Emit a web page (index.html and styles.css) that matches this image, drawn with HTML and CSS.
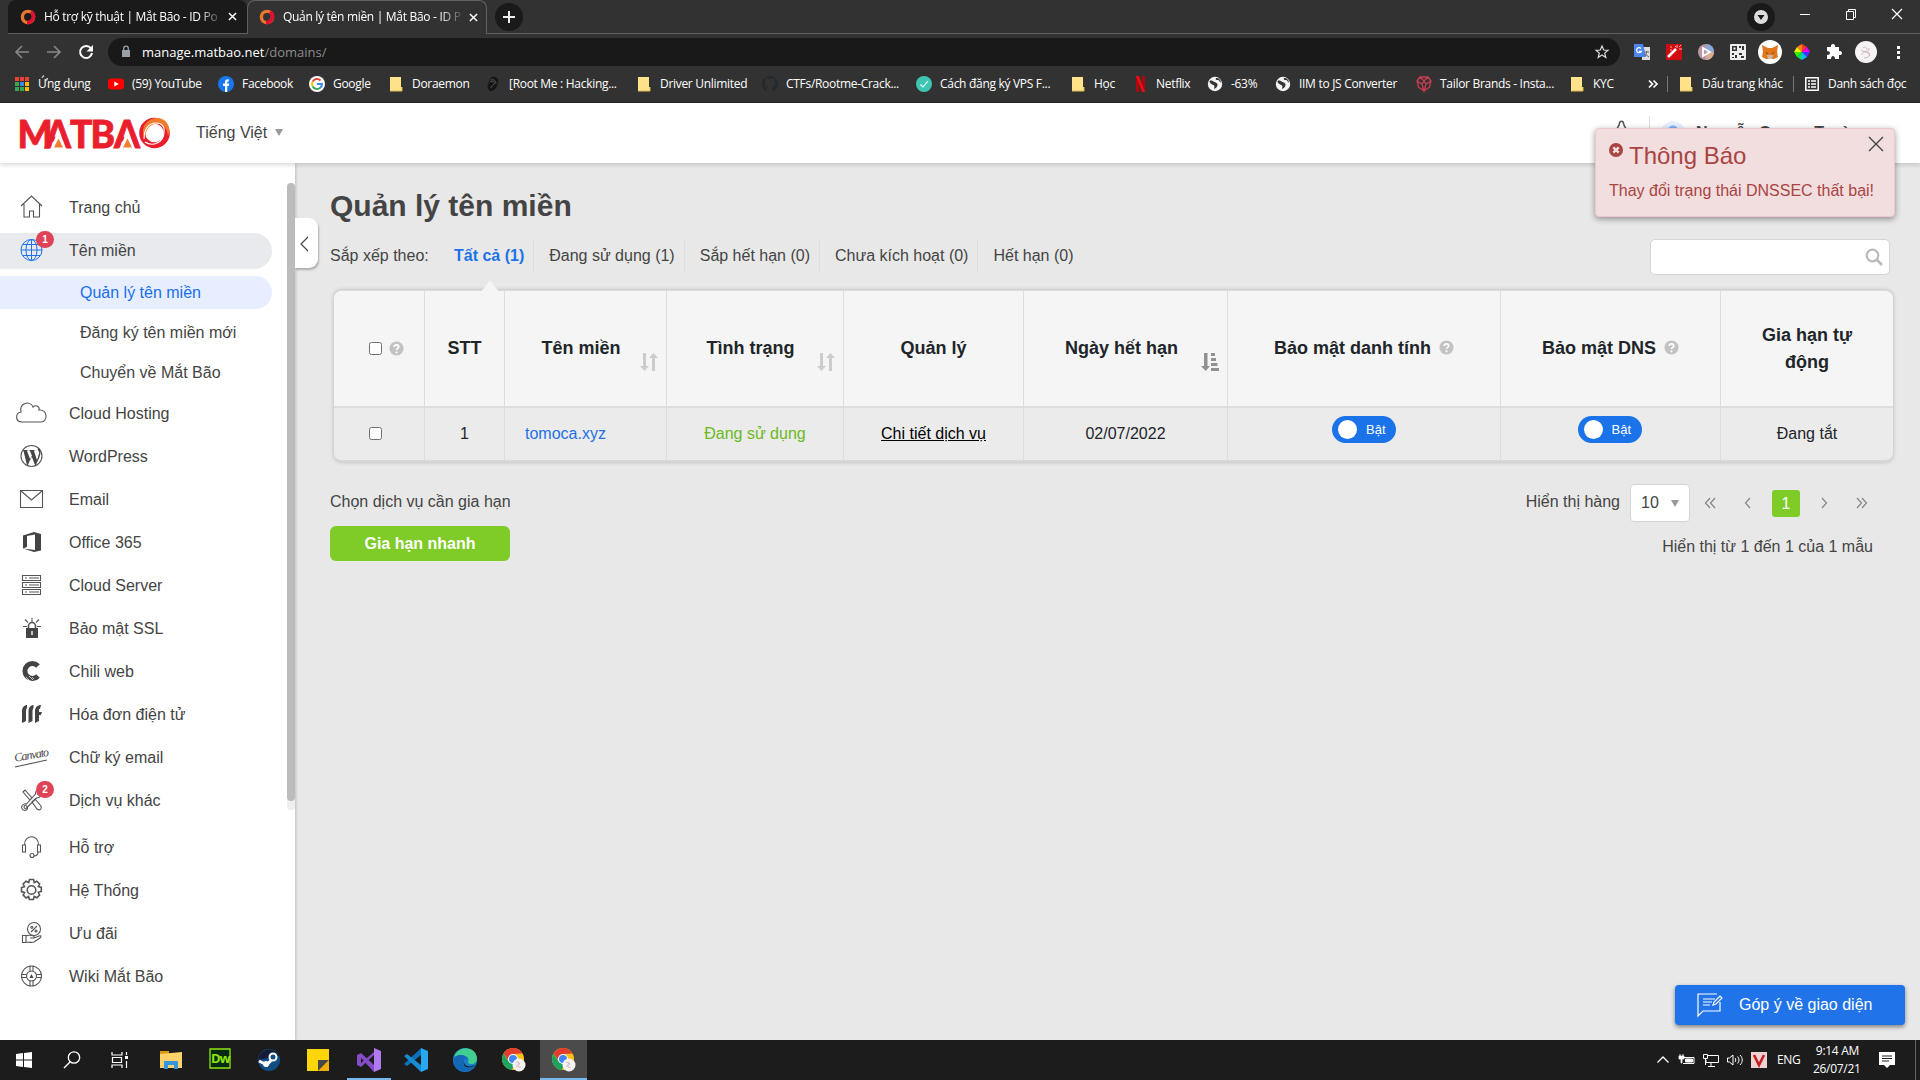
FILE: index.html
```html
<!DOCTYPE html>
<html lang="vi">
<head>
<meta charset="utf-8">
<title>Quản lý tên miền | Mắt Bão - ID Portal</title>
<link rel="stylesheet" href="styles.css">
</head>
<body>
<svg class="defs" aria-hidden="true">
  <symbol id="folder" viewBox="0 0 16 16"><path d="M2 1h11v10h1v4H2z" fill="#ffe28a"/><path d="M2 15h12v-4" fill="none" stroke="#e3bb4c"/></symbol>
  <symbol id="globe" viewBox="0 0 16 16"><circle cx="8" cy="8" r="7.2" fill="#f4f4f4"/><path d="M2.500 5c2-1 3 0 5 1s3 1 3 3-2 3-3 4c-1-1 1-3-1-4S3 8 2.500 5zM9 2c-1 2 1 2 2 2s2 2 3 3c0-3-2-5-5-5z" fill="#333"/></symbol>
  <symbol id="swirl" viewBox="0 0 16 16"><circle cx="8" cy="8" r="5.6" fill="none" stroke="#e8772e" stroke-width="3.4"/><path d="M11 2.8a6 6 0 0 1-4 10.8" fill="none" stroke="#e01030" stroke-width="3.6"/></symbol>
  <symbol id="help" viewBox="0 0 16 16"><circle cx="8" cy="8" r="7.5" fill="#c2c2c2"/><path d="M5.6 6.3C5.7 3.2 10.4 3.400 10.400 6.100 10.400 7.900 8 7.800 8 9.600" fill="none" stroke="#fff" stroke-width="1.9"/><circle cx="8" cy="12" r="1.200" fill="#fff"/></symbol>
  <symbol id="sort" viewBox="0 0 18 20"><path d="M3 1h3v13h3l-4.500 5L0 14h3zM12 19h3V6h3l-4.500-5L9 6h3z" fill="#ccc"/></symbol>
  <symbol id="chrome" viewBox="0 0 24 24"><circle cx="11" cy="11" r="11" fill="#fbc116"/><path d="M1.500 5.500A11 11 0 0 1 20.500 5.500L11 6 7 13z" fill="#e33b2e"/><path d="M1.500 5.500 7 14 12 16 10 22A11 11 0 0 1 1.500 5.500z" fill="#1da260"/><circle cx="11" cy="11" r="5" fill="#fff"/><circle cx="11" cy="11" r="4" fill="#4285f4"/><circle cx="17" cy="17" r="6.500" fill="#f7f2f3"/><path d="M14 15c2-2 5 0 3 2s-1 3 2 2M14 19l3-4" fill="none" stroke="#c9adb5" stroke-width=".8"/></symbol>
</svg>

<div class="browser">
  <div class="tabs">
    <div class="tab"><svg class="i16"><use href="#swirl"/></svg><span class="tab-title">Hỗ trợ kỹ thuật | Mắt Bão - ID Po</span><svg class="x" viewBox="0 0 10 10"><path d="M1 1l8 8M9 1L1 9"/></svg></div>
    <div class="tab active"><svg class="i16"><use href="#swirl"/></svg><span class="tab-title">Quản lý tên miền | Mắt Bão - ID P</span><svg class="x" viewBox="0 0 10 10"><path d="M1 1l8 8M9 1L1 9"/></svg></div>
    <div class="strip">
      <svg class="newtab" viewBox="0 0 28 28"><circle cx="14" cy="14" r="14" fill="#1a1a1a"/><path d="M8 14h12M14 8v12" stroke="#eee" stroke-width="2"/></svg>
      <div class="window-buttons">
        <svg width="28" height="28" viewBox="0 0 28 28"><circle cx="14" cy="14" r="14" fill="#1a1a1a"/><circle cx="14" cy="14" r="7" fill="#ddd"/><path d="M10.500 12h7L14 17z" fill="#1a1a1a"/></svg>
        <svg width="12" height="28" viewBox="0 0 12 28"><path d="M1 11.500h10" stroke="#fff"/></svg>
        <svg width="12" height="28" viewBox="0 0 12 28"><path d="M1.500 8.500h7v8h-7zM3.500 8V6.500h7v8H9" fill="none" stroke="#fff"/></svg>
        <svg width="12" height="28" viewBox="0 0 12 28"><path d="M1 6l10 10M11 6L1 16" stroke="#fff" stroke-width="1.200"/></svg>
      </div>
    </div>
  </div>
  <div class="toolbar">
    <div class="nav-buttons">
      <svg viewBox="0 0 16 16"><path d="M15 8H2M8 2L2 8l6 6" fill="none" stroke="#888" stroke-width="1.600"/></svg>
      <svg viewBox="0 0 16 16"><path d="M1 8h13M8 2l6 6-6 6" fill="none" stroke="#888" stroke-width="1.600"/></svg>
      <svg viewBox="0 0 16 16"><path d="M13 4.500A6 6 0 1 0 14 9" fill="none" stroke="#fff" stroke-width="2"/><path d="M15 1v6.500H8.500z" fill="#fff"/></svg>
    </div>
    <div class="address">
      <svg width="10" height="14" viewBox="0 0 10 14"><path d="M1 5h8v7H1z" fill="#9aa0a6"/><path d="M2.700 5.500V3.500a2.300 2.300 0 0 1 4.600 0v2" fill="none" stroke="#9aa0a6" stroke-width="1.300"/></svg>
      <span class="url"><b>manage.matbao.net</b>/domains/</span>
      <svg class="star" width="14" height="14" viewBox="0 0 14 14"><path d="M7 1l1.700 4 4.300.300-3.300 2.800 1.100 4.300L7 10l-3.800 2.400 1.100-4.300L1 5.300 5.300 5z" fill="none" stroke="#ddd" stroke-width="1.200"/></svg>
    </div>
    <div class="extensions">
      <svg viewBox="0 0 24 24"><path d="M12 7h8v13h-8z" fill="#ddd"/><path d="M4 4h9l3 13H4z" fill="#4a86ee"/><path d="M11 8.500a2.500 2.500 0 1 0 .3 3H9" fill="none" stroke="#fff" stroke-width="1.300"/><path d="M14 12h5M16.500 11v1c0 2-1 3-2 4M15 14l4 3" stroke="#666" fill="none"/></svg>
      <svg viewBox="0 0 24 24"><path d="M4 4h16v16H4z" fill="#d00c10"/><path d="M6 17l8-8" stroke="#fff" stroke-width="2.500"/><path d="M15 5v3M17 9h3M9 6v2M13 6l1 1M17 7l2-2M8 10h2" stroke="#ffb1b1"/></svg>
      <svg viewBox="0 0 24 24"><circle cx="12" cy="12" r="8" fill="#b995a5"/><path d="M12 4a8 8 0 0 1 8 8l-8 0z" fill="#89a9d8"/><path d="M20 12a8 8 0 0 1-8 8v-8z" fill="#d8ac90"/><path d="M9 8l7 4-7 4z" fill="none" stroke="#fff" stroke-width="1.800"/></svg>
      <svg viewBox="0 0 24 24"><rect x="4" y="4" width="16" height="16" rx="1" fill="#eee"/><path d="M6 6h5v5H6zM13 6h2v2h-2zM16 6h2v4h-2zM6 13h2v2H6zM9 15h2v3H9zM13 13h3v2h-3zM15 16h3v2h-3zM6 17h2v1H6z" fill="#333"/><path d="M7.500 7.500h2v2h-2z" fill="#fff"/></svg>
      <svg viewBox="0 0 24 24"><circle cx="12" cy="12" r="12" fill="#fff"/><path d="M4 5l6 3h4l6-3-1 7 1 5-4 2H8l-4-2 1-5z" fill="#e2761b"/><path d="M9 15h6l-1 4h-4z" fill="#c9b8a8"/><path d="M7 12l3 1v1zM17 12l-3 1v1z" fill="#333"/></svg>
      <svg viewBox="0 0 24 24"><path d="M12 12V4l5 3z" fill="#f33"/><path d="M12 12l5-5 3 5z" fill="#e0e"/><path d="M12 12h8l-3 5z" fill="#43f"/><path d="M12 12l5 5-5 3z" fill="#0bf"/><path d="M12 12v8l-5-3z" fill="#0d6"/><path d="M12 12l-5 5-3-5z" fill="#3e0"/><path d="M12 12H4l3-5z" fill="#ee0"/><path d="M12 12L7 7l5-3z" fill="#f80"/></svg>
      <svg viewBox="0 0 24 24"><path d="M5 7h4c-1-4 5-4 4 0h4v4c4-1 4 5 0 4v4h-4c0-4-4-4-4 0H5v-4c4 0 4-4 0-4z" fill="#fff"/></svg>
      <svg viewBox="0 0 24 24"><circle cx="12" cy="12" r="11" fill="#f7f4f5"/><path d="M8 15c0-5 8-2 7-7M7 10c4 3 7 1 9 6M10 18c5 0 7-3 4-6M9 8c2-2 4 0 4 2" fill="none" stroke="#c9b4ba"/></svg>
      <svg viewBox="0 0 24 24"><path d="M11 6h3v3h-3zM11 11h3v3h-3zM11 16h3v3h-3z" fill="#fff"/></svg>
    </div>
  </div>
  <div class="bookmarks">
    <a><svg class="i16" viewBox="0 0 16 16"><path d="M1 1h4v4H1zM6 1h4v4H6zM11 1h4v4h-4z" fill="#ea4335"/><path d="M1 6h4v4H1zM1 11h4v4H1zM6 11h4v4H6z" fill="#34a853"/><path d="M6 6h4v4H6z" fill="#4285f4"/><path d="M11 6h4v4h-4zM11 11h4v4h-4z" fill="#fbbc05"/><path d="M5.500 1v14M10.500 1v14M1 5.500h14M1 10.500h14" stroke="#323232"/></svg><span>Ứng dụng</span></a>
    <a><svg class="i16" viewBox="0 0 16 16"><rect y="2.500" width="16" height="11" rx="3" fill="#f00"/><path d="M6.300 5.500v5l4.500-2.500z" fill="#fff"/></svg><span>(59) YouTube</span></a>
    <a><svg class="i16" viewBox="0 0 16 16"><circle cx="8" cy="8" r="8" fill="#1877f2"/><path d="M7 16v-6H5V7.500h2V6c0-2 1.500-3 3.800-2.600v2C9.500 5.300 9.200 5.700 9.200 6.500v1h2L10.800 10H9.200v6z" fill="#fff"/></svg><span>Facebook</span></a>
    <a><svg class="i16" viewBox="0 0 16 16"><circle cx="8" cy="8" r="8" fill="#fff"/><path d="M3.700 5.500A5 5 0 0 1 11.500 4.500" stroke="#ea4335" stroke-width="2" fill="none"/><path d="M3.700 5.500a5 5 0 0 0 0 5" stroke="#fbbc05" stroke-width="2" fill="none"/><path d="M3.700 10.500a5 5 0 0 0 7.500 1.300" stroke="#34a853" stroke-width="2" fill="none"/><path d="M8 8h5a5 5 0 0 1-1.800 3.800" stroke="#4285f4" stroke-width="2" fill="none"/></svg><span>Google</span></a>
    <a><svg class="i16"><use href="#folder"/></svg><span>Doraemon</span></a>
    <a><svg class="i16" viewBox="0 0 16 16"><path d="M10 1c4 1 4 6 2 9-1 3-4 5-7 5-3-2-3-6-1-9 1-4 3-6 6-5z" fill="#161616"/><path d="M5 6c3-2 5 0 4 2s-3 2-3 4M6 4c3-1 5 1 5 4" fill="none" stroke="#555"/></svg><span>[Root Me : Hacking...</span></a>
    <a><svg class="i16"><use href="#folder"/></svg><span>Driver Unlimited</span></a>
    <a><svg class="i16" viewBox="0 0 16 16"><path d="M8 0a8 8 0 0 0-2.600 15.600v-3C3.500 13 3.300 11.500 2 11c1.500-.5 2 1 3.400.9.100-.7.300-1 .6-1.300C2.500 10 2 6 3.700 4.300 3.500 3.500 3.600 2.700 3.900 2 5 2 5.600 2.700 6.200 3a8 8 0 0 1 3.700 0C10.500 2.600 11.200 2 12.100 2c.3.800.3 1.600.1 2.300C14 6.200 13.500 10 10 10.600c.5.700.5 1.500.5 5A8 8 0 0 0 8 0z" fill="#24292e"/></svg><span>CTFs/Rootme-Crack...</span></a>
    <a><svg class="i16" viewBox="0 0 16 16"><circle cx="8" cy="8" r="8" fill="#3fc6b2"/><path d="M4.500 8.500l2.500 2.500 5-6" fill="none" stroke="#fff" stroke-width="1.100"/></svg><span>Cách đăng ký VPS F...</span></a>
    <a><svg class="i16"><use href="#folder"/></svg><span>Học</span></a>
    <a><svg class="i16" viewBox="0 0 16 16"><path d="M4 0h3v16H4zM10 0h3v16h-3z" fill="#b00610"/><path d="M4 0h3l6 16h-3z" fill="#f00a16"/></svg><span>Netflix</span></a>
    <a><svg class="i16"><use href="#globe"/></svg><span>-63%</span></a>
    <a><svg class="i16"><use href="#globe"/></svg><span>IIM to JS Converter</span></a>
    <a><svg class="i16" viewBox="0 0 16 16"><path d="M4 1h8l3 4-1.500 6L8 15l-5.500-4L1 5zM4 1l4 4 4-4M1 5l5 3 2-3 2 3 5-3M6 8l2 7 2-7" fill="none" stroke="#c83c50" stroke-width="1.300"/></svg><span>Tailor Brands - Insta...</span></a>
    <a><svg class="i16"><use href="#folder"/></svg><span>KYC</span></a>
    <svg class="more" viewBox="0 0 10 10"><path d="M1 1.500L4.500 5 1 8.500M5.500 1.500L9 5 5.500 8.500" fill="none" stroke="#fff" stroke-width="1.700"/></svg>
    <a class="sep"><svg class="i16"><use href="#folder"/></svg><span>Dấu trang khác</span></a>
    <a class="sep"><svg class="i16" viewBox="0 0 16 16"><path d="M1.800 1.800h12.400v12.400H1.800z" fill="none" stroke="#fff" stroke-width="1.500"/><path d="M4 5h2M7 5h5M4 8h2M7 8h5M4 11h2M7 11h5" stroke="#fff" stroke-width="1.400"/></svg><span>Danh sách đọc</span></a>
  </div>
</div>

<header class="site-header">
  <svg class="logo" viewBox="0 0 152 32">
    <text x="-2.500 25 50 70.500 94" y="30.500" class="logo-text">MATBA</text>
    <path d="M31 31.500L38.500 12l7.500 19.500zM100 31.500l7.500-19.500 7.500 19.500z" fill="#fff"/>
    <path d="M34 30.500l4.500-9 4.500 9zM103 30.500l4.500-9 4.500 9z" fill="#f08030"/>
    <circle cx="134.500" cy="16" r="12.300" fill="none" stroke="#ea1f2d" stroke-width="6"/>
    <path d="M125 22C119 10 128 1 137 1c9 0 15 9 11 18-1-9-6-13-13-12-6 1-10 7-10 15z" fill="#f47b2a"/>
    <path d="M124 22c0-9 4-16 12-16 6 0 9 4 8 9M125 25c7 5 19 1 19-10" fill="none" stroke="#fff" stroke-width="1.100"/>
  </svg>
  <div class="language">Tiếng Việt <i class="caret"></i></div>
  <div class="account">
    <svg class="bell" viewBox="0 0 20 24"><path d="M8.500 3.500c0-3 4-3 4 0M8.500 3.500c-1 5-4 5-4 10 0 3-2 4-2 4h16s-2-1-2-4c0-5-3-5-4-10" fill="none" stroke="#555" stroke-width="1.500"/></svg>
    <span class="user"><svg width="24" height="24" viewBox="0 0 24 24"><circle cx="12" cy="12" r="12" fill="#e6efff"/><circle cx="12" cy="9.500" r="5" fill="#7fb0f5"/><path d="M3 22c1-9 17-9 18 0z" fill="#7fb0f5"/></svg><b>Nguyễn Quang Trường</b></span>
  </div>
</header>

<main class="page">
  <aside class="sidebar">
    <nav class="menu">
      <a><svg viewBox="0 0 36 28"><path d="M6 13L16.500 3 27 13M9 11v13h5.500v-6h4v6H24.500V11" class="s"/></svg>Trang chủ</a>
      <a class="current"><svg viewBox="0 0 36 28"><g class="s blue"><circle cx="16.500" cy="14" r="10.500"/><ellipse cx="16.500" cy="14" rx="5.500" ry="10.500"/><path d="M16.500 3.500v21M6 14h21M8 8.500h17M8 19.500h17"/></g></svg>Tên miền<em class="badge">1</em></a>
      <a class="sub selected">Quản lý tên miền</a>
      <a class="sub">Đăng ký tên miền mới</a>
      <a class="sub">Chuyển về Mắt Bão</a>
      <a><svg viewBox="0 0 36 28"><path d="M7 23c-7 0-7-9-1-10C4 4 15 1 18 8c3-3 7 0 6 3 9-1 9 12 2 12z" class="s"/></svg>Cloud Hosting</a>
      <a><svg viewBox="0 0 36 28"><circle cx="16.500" cy="14" r="10.500" class="s"/><path d="M8 8h5l-1 1 3.500 9 1.500-4-2-5-1-1h6l-1 1 3 9 2-6c1-3-2-3-1-6l2 1c2 6-2 10-4 16l-1 0-3.500-9-3.500 9h-1L8.500 9z" class="f"/></svg>WordPress</a>
      <a><svg viewBox="0 0 36 28"><path d="M5.500 5.500h22v17h-22zM6 6l10.500 9L27 6" class="s"/></svg>Email</a>
      <a><svg viewBox="0 0 36 28"><path d="M8 7.500L19 4l7 2v16.500L19 24 8 20.500 20 22V6.500L12 8v11l-4 1.500z" class="f"/></svg>Office 365</a>
      <a><svg viewBox="0 0 36 28"><path d="M7.500 4.500h18v5h-18zM7.500 11.500h18v5h-18zM7.500 18.500h18v5h-18zM10 7h2M14 7h10M10 14h2M14 14h10M10 21h2M14 21h10" class="s"/></svg>Cloud Server</a>
      <a><svg viewBox="0 0 36 28"><path d="M11 14h12v10H11z" class="f"/><path d="M13.500 14v-2a3.500 3.500 0 0 1 7 0v2" class="s g"/><path d="M17 4v4M10 5.500l3 3M24 5.500l-3 3M8 12.500h4M22 12.500h4" class="s"/><path d="M16.300 17h1.400v4h-1.400z" fill="#fff"/></svg>Bảo mật SSL</a>
      <a><svg viewBox="0 0 36 28"><path d="M23 9a7.500 7.500 0 1 0 0 10" fill="none" stroke="#444" stroke-width="5"/><path d="M11 20l4 4M14 19l4 4M17 20l2 2" stroke="#fff" stroke-width=".7"/></svg>Chili web</a>
      <a><svg viewBox="0 0 36 28"><path d="M7 23V11c0-4 3-6 5-6v3c-1 1-1 3-1 4v9zM13.500 23V11c0-4 3-6 5-6v3c-1 1-1 3-1 4v9zM20 23V11c0-4 3-6 6-6l-1 4h-1v3h3l-1 3h-2v6z" class="f"/></svg>Hóa đơn điện tử</a>
      <a><svg viewBox="0 0 36 28"><text x="0" y="18" class="signature" transform="rotate(-10 4 18)" textLength="35">Canvato</text><path d="M0 24L32 17" class="s"/></svg>Chữ ký email</a>
      <a><svg viewBox="0 0 36 28"><path d="M8 6l2-2 7 8-2 2zM17 16l3-3 6 7c1 3-1 5-4 3zM6.500 21c1-4 5-3 5-3l9-10c0-3 1-4 3-4l-1 4 3 2c-1 2-3 2-4 2l-9 9c1 4-5 5-6 0z" class="s"/><circle cx="10.500" cy="21" r="1.500" class="s"/></svg>Dịch vụ khác<em class="badge">2</em></a>
      <a class="first-extra"><svg viewBox="0 0 36 28"><path d="M9.500 12C9 1 24 1 23.500 12M9.500 12h-2v7h3v-7zM23.500 12h2v7h-3v-7zM23 19c0 3-2 4-4 4" class="s"/><circle cx="17" cy="22.500" r="2" class="s"/></svg>Hỗ trợ</a>
      <a><svg viewBox="0 0 36 28"><circle cx="16.500" cy="14" r="4.300" class="s g"/><path d="M14.500 3.500h4l.8 3 2.500-1.300 2.800 2.800-1.300 2.500 3 .9v4l-3 .9 1.300 2.700-2.800 2.800-2.600-1.300-.8 3h-4l-.8-3L11 22l-2.800-2.900 1.300-2.600-3-.9v-4l3-.9L8.200 8 11 5.200l2.700 1.300z" class="s g"/></svg>Hệ Thống</a>
      <a><svg viewBox="0 0 36 28"><circle cx="19" cy="10" r="6.500" class="s"/><path d="M16 13l6-6M7.500 16.500h3.500v7H7.500zM11 17c4-2 5 0 8 0v2h-4M19 19l5-2c3-1 2 1 1 2l-6 4c-3 1-5 0-8 0" class="s"/><circle cx="16.800" cy="8.300" r="1" class="s"/><circle cx="21" cy="12" r="1" class="s"/></svg>Ưu đãi</a>
      <a><svg viewBox="0 0 36 28"><circle cx="16.500" cy="14" r="10" class="s"/><circle cx="16.500" cy="14" r="5" class="s"/><path d="M15 3.500v6M18 3.500v6M15 18.500v6M18 18.500v6M6 12.500h5.500M6 15.500h5.500M21.500 12.500H27M21.500 15.500H27" class="s"/><path d="M14.500 16l2-4 2 4z" class="f"/></svg>Wiki Mắt Bão</a>
    </nav>
    <div class="scrollbar"><div class="thumb"></div></div>
    <button class="collapse"><svg width="9" height="16" viewBox="0 0 9 16"><path d="M8 1L1 8l7 7" fill="none" stroke="#444" stroke-width="1.200"/></svg></button>
  </aside>

  <section class="content">
    <h1>Quản lý tên miền</h1>
    <div class="filters">
      <span class="label">Sắp xếp theo:</span>
      <a class="on">Tất cả (1)</a><a>Đang sử dụng (1)</a><a>Sắp hết hạn (0)</a><a>Chưa kích hoạt (0)</a><a>Hết hạn (0)</a>
      <div class="search"><svg width="18" height="18" viewBox="0 0 18 18"><circle cx="7.500" cy="7.500" r="5.800" fill="none" stroke="#bbb" stroke-width="2.200"/><path d="M12 12l5 5" stroke="#bbb" stroke-width="2.600"/></svg></div>
    </div>
    <div class="table">
      <div class="row head">
        <div class="check"><i class="box"></i><svg class="q"><use href="#help"/></svg></div>
        <div>STT</div>
        <div>Tên miền<svg class="sort"><use href="#sort"/></svg></div>
        <div>Tình trạng<svg class="sort"><use href="#sort"/></svg></div>
        <div>Quản lý</div>
        <div>Ngày hết hạn<svg class="sort" viewBox="0 0 18 20"><path d="M3 1h3.500v13H9l-4.300 5L0 14h3zM10 1h4v3h-4zM10 6h5v3h-5zM10 11h6.500v3H10zM10 16h8v3h-8z" fill="#919191"/></svg></div>
        <div class="with-help">Bảo mật danh tính<svg class="q"><use href="#help"/></svg></div>
        <div class="with-help">Bảo mật DNS<svg class="q"><use href="#help"/></svg></div>
        <div>Gia hạn tự<br>động</div>
      </div>
      <div class="row">
        <div class="check"><i class="box"></i></div>
        <div>1</div>
        <div class="domain">tomoca.xyz</div>
        <div class="status">Đang sử dụng</div>
        <div><a class="detail">Chi tiết dịch vụ</a></div>
        <div>02/07/2022</div>
        <div><span class="switch"><i></i>Bật</span></div>
        <div><span class="switch dns"><i></i>Bật</span></div>
        <div>Đang tắt</div>
      </div>
    </div>
    <div class="below">
      <div class="renew"><p>Chọn dịch vụ cần gia hạn</p><button>Gia hạn nhanh</button></div>
      <div class="paging">
        <div class="pager">
          <span>Hiển thị hàng</span>
          <span class="select">10<i class="caret"></i></span>
          <svg class="edge-first" viewBox="0 0 12 12"><path d="M6 1L1.500 6 6 11M11 1L6.500 6 11 11"/></svg>
          <svg class="far" viewBox="0 0 12 12"><path d="M8 1L3.500 6 8 11"/></svg>
          <b>1</b>
          <svg class="near" viewBox="0 0 12 12"><path d="M4 1l4.500 5L4 11"/></svg>
          <svg class="far" viewBox="0 0 12 12"><path d="M1 1l4.500 5L1 11M6 1l4.500 5L6 11"/></svg>
        </div>
        <p>Hiển thị từ 1 đến 1 của 1 mẫu</p>
      </div>
    </div>
  </section>
</main>

<div class="toast">
  <div class="toast-title"><svg width="14" height="14" viewBox="0 0 14 14"><circle cx="7" cy="7" r="7" fill="#a94442"/><path d="M4.300 4.300l5.400 5.400M9.700 4.300L4.300 9.700" stroke="#f2dede" stroke-width="2.400"/></svg>Thông Báo</div>
  <p>Thay đổi trạng thái DNSSEC thất bại!</p>
  <svg class="close" viewBox="0 0 16 16"><path d="M1 1l14 14M15 1L1 15" stroke="#444" stroke-width="1.400"/></svg>
</div>

<button class="feedback"><svg width="26" height="24" viewBox="0 0 26 24"><path d="M20 1H1v22l5-5h17v-9M6 6h12M6 9h9M6 12h7M16 12l1-3 6-6 2 2-6 6z" fill="none" stroke="#fff" stroke-width="1.200"/></svg>Góp ý về giao diện</button>

<footer class="taskbar">
  <div class="apps">
    <span><svg viewBox="0 0 24 24"><path d="M4 6l7-1v6.500H4zM12 5l8-1v7.500h-8zM4 12.500h7V19l-7-1zM12 12.500h8V20l-8-1z" fill="#fff"/></svg></span>
    <span><svg viewBox="0 0 24 24"><circle cx="14" cy="9.500" r="5.700" fill="none" stroke="#fff" stroke-width="1.300"/><path d="M10 14l-6 6" stroke="#fff" stroke-width="1.500"/></svg></span>
    <span class="task-view"><svg viewBox="0 0 24 24"><path d="M4 4v3h10V4M4 20v-3h10v3M4.500 9.500h9v5h-9zM18.500 4v3M18.500 13v7" fill="none" stroke="#fff" stroke-width="1.200"/><path d="M17 8h3v3h-3z" fill="#fff"/></svg></span>
    <span><svg viewBox="0 0 24 24"><path d="M1 3h9v4H1z" fill="#d99a13"/><path d="M1 6l22-2v16H1z" fill="#fdd268"/><path d="M5 13h14v8h-4v-4H9v4H5z" fill="#3695e0"/></svg></span>
    <span><svg viewBox="0 0 24 24"><path d="M2 1h20v19H2z" fill="#082a13" stroke="#8fe60b" stroke-width="1.300"/><text x="3" y="15" class="dw">Dw</text></svg></span>
    <span><svg viewBox="0 0 24 24"><circle cx="12" cy="12" r="11" fill="#114f83"/><path d="M1 12A11 11 0 0 1 22 8z" fill="#141c3a"/><path d="M2 13l8 4 6-7" fill="none" stroke="#fff" stroke-width="3"/><circle cx="16" cy="9" r="3.500" fill="#114f83" stroke="#fff" stroke-width="2"/><circle cx="9" cy="16" r="3" fill="#fff"/></svg></span>
    <span><svg viewBox="0 0 24 24"><path d="M1 1h22v11L12 23H1z" fill="#ffd60a"/><path d="M12 12h11L12 23z" fill="#474747"/><path d="M23 12v11H12z" fill="#f0ae08"/></svg></span>
    <span class="running"><svg viewBox="0 0 24 24"><path d="M17 0l7 3v18l-7 3z" fill="#b179f1"/><path d="M17 0v7L4 19l-4-2V7l4-2 13 12v7L4 10v5L17 4z" fill="#854cc7"/></svg></span>
    <span><svg viewBox="0 0 24 24"><path d="M17 0l7 3v18l-7 3z" fill="#29a8f2"/><path d="M17 0v7L3 18l-3-2 14-13z" fill="#0873bd"/><path d="M0 8l3-2 14 11v7z" fill="#168bd3"/></svg></span>
    <span><svg viewBox="0 0 24 24"><circle cx="12" cy="12" r="12" fill="#1680ce"/><path d="M1 9C5-4 24-2 24 11c0 6-9 6-9 3 3-5-5-9-14-5z" fill="#41cf91"/><path d="M0 12c2-7 13-6 14-1-6 0-6 8 2 9 3 0 5-1 6-2-4 7-13 7-18 2-3-2-4-5-4-8z" fill="#1568b8"/><path d="M11 12c-1 6 5 8 11 5 0 2-14 6-11-5z" fill="#1c1c1c"/></svg></span>
    <span><svg viewBox="0 0 24 24"><use href="#chrome"/></svg></span>
    <span class="running front"><svg viewBox="0 0 24 24"><use href="#chrome"/></svg></span>
  </div>
  <div class="tray">
    <svg viewBox="0 0 16 16"><path d="M2.500 10.500L8 5l5.500 5.500" fill="none" stroke="#fff" stroke-width="1.300"/></svg>
    <svg viewBox="0 0 16 16"><path d="M5 5.500h10v6H4M6.500 7h7v3h-7z" fill="none" stroke="#fff"/><path d="M6 7h8v3H6z" fill="#fff"/><path d="M0 4h5v3H3v4H2V7H0zM1 2v2M4 2v2" fill="#fff" stroke="#fff" stroke-width=".8"/></svg>
    <svg viewBox="0 0 16 16"><path d="M5 3.500h10.500v7H3V8M8 11v3M5 14.500h7M.5 2.500h4v4h-4zM2.500 7v6" fill="none" stroke="#fff"/></svg>
    <svg viewBox="0 0 16 16"><path d="M.5 6h2L6 3v10L2.500 10h-2zM8 6c1 1 1 3 0 4M10.500 4.500c2 2 2 5 0 7M13 3c3 3 3 7 0 10" fill="none" stroke="#fff"/></svg>
    <svg viewBox="0 0 16 16"><path d="M0 0h16v16H0z" fill="#efd3d3"/><path d="M3 3l5 10 5-10" fill="none" stroke="#c41d22" stroke-width="2.600"/></svg>
    <span class="lang">ENG</span>
    <span class="clock">9:14 AM<br>26/07/21</span>
    <svg class="notice" viewBox="0 0 16 16"><path d="M0 0h16v13h-5l-3 3-3-3H0z" fill="#fff"/><path d="M3 4h10M3 6.500h10M3 9h7" stroke="#1c1c1c"/></svg>
  </div>
</footer>
</body>
</html>
```
FILE: styles.css
```css
* { box-sizing: border-box; }
body { margin: 0; width: 1920px; height: 1080px; overflow: hidden; display: flex; flex-direction: column; font: 16px/24px "Liberation Sans", Arial, sans-serif; color: #444; background: #e8e8e8; }
p, h1 { margin: 0; }
button { border: 0; font: inherit; }
svg { display: block; flex: none; overflow: visible; }
.defs { position: absolute; width: 0; height: 0; }
.i16 { width: 16px; height: 16px; }
.caret { display: inline-block; border: 4px solid transparent; border-top: 7px solid #999; border-bottom: 0; }

/* Browser window */
.browser { height: 103px; flex: none; background: #323232; color: #fff; font: 12px/16px "Open Sans", "Noto Sans", sans-serif; border-bottom: 1px solid #222; letter-spacing: -.3px; }
.tabs { display: flex; height: 34px; padding-left: 8px; background: #323232; }
.tab { width: 239px; height: 34px; display: flex; align-items: center; gap: 8px; padding: 0 10px 0 12px; background: #1a1a1a; border-radius: 8px 8px 0 0; border-bottom: 1px solid #606060; }
.tab.active { background: #323232; border: 1px solid #606060; border-bottom: 0; padding: 0 10px 1px 11px; width: 240px; }
.tab-title { flex: 1; white-space: nowrap; -webkit-mask-image: linear-gradient(90deg, #000 88%, transparent 102%); mask-image: linear-gradient(90deg, #000 88%, transparent 102%); }
.x { width: 9px; height: 9px; stroke: #fff; stroke-width: 1.6; }
.strip { flex: 1; display: flex; justify-content: space-between; border-bottom: 1px solid #606060; padding: 3px 17px 0 8px; }
.newtab { width: 28px; height: 28px; }
.window-buttons { display: flex; gap: 34px; }
.window-buttons svg:first-child { margin-right: -10px; }
.toolbar { height: 36px; display: flex; align-items: center; padding: 0 9px 0 14px; }
.nav-buttons { display: flex; gap: 16px; width: 94px; }
.nav-buttons svg { width: 16px; height: 16px; }
.address { width: 1512px; height: 28px; border-radius: 14px; background: #191919; display: flex; align-items: center; padding: 0 11px 0 13px; gap: 11px; }
.url { flex: 1; font-size: 13px; color: #8d8d8d; letter-spacing: 0; }
.url b { font-weight: 400; color: #fff; }
.extensions { display: flex; gap: 8px; margin-left: 10px; }
.extensions svg { width: 24px; height: 24px; }
.bookmarks { height: 28px; display: grid; align-items: center; padding-left: 14px; grid-template-columns: 94px 110px 91px 79px 97px 151px 126px 154px 154px 62px 75px 68px 141px 153px 79px 19px 126px 126px; }
.bookmarks a { display: flex; align-items: center; gap: 8px; white-space: nowrap; }
.bookmarks .more { width: 10px; height: 10px; }
.bookmarks .sep { border-left: 1px solid #777; padding-left: 10px; height: 16px; }

/* Site header */
.site-header { height: 60px; flex: none; display: flex; align-items: center; padding: 0 20px; background: #fff; box-shadow: 0 2px 4px rgba(0,0,0,.15); z-index: 1; }
.logo { width: 152px; height: 32px; margin-right: 24px; }
.logo-text { font: 900 37px Lato, sans-serif; fill: #ea1f2d; stroke: #ea1f2d; stroke-width: .8; }
.language { flex: 1; }
.language .caret { margin-left: 3px; vertical-align: 2px; }
.account { display: flex; width: 289px; height: 34px; }
.bell { width: 20px; height: 24px; margin: 4px 18px 0 0; }
.user { display: flex; gap: 11px; padding-left: 11px; border-left: 1px solid #ddd; white-space: nowrap; align-items: center; }

/* Page */
.page { flex: 1; display: flex; min-height: 0; }
.sidebar { position: relative; width: 295px; background: #fff; display: flex; padding-top: 20px; box-shadow: 1px 0 3px rgba(0,0,0,.18); }
.menu { width: 287px; padding: 7px 15px 0 0; display: flex; flex-direction: column; gap: 7px; }
.menu a { position: relative; height: 36px; display: flex; align-items: center; gap: 18px; padding-left: 15px; }
.menu a > svg { width: 36px; height: 28px; margin-top: -3px; }
.menu .sub { height: 33px; padding: 1px 0 0 80px; border-radius: 0 17px 17px 0; }
.menu .current { background: #e8eaed; border-radius: 0 18px 18px 0; }
.menu .selected { background: #e7eeff; color: #1a6fec; }
.menu .first-extra { margin-top: 4px; }
.s { fill: none; stroke: #555; stroke-width: 1.1; }
.g { stroke-width: 1.6; }
.blue { stroke: #1f72ea; stroke-width: 1; }
.f { fill: #444; }
.signature { font: italic 12px "Liberation Serif", serif; fill: #444; }
.badge { position: absolute; left: 36px; top: -2px; width: 18px; height: 17px; border-radius: 9px; background: #de4357; color: #fff; font: 700 10px/17px "Liberation Sans", sans-serif; text-align: center; }
.scrollbar { width: 8px; height: 627px; background: #efefef; border-radius: 4px; }
.thumb { height: 618px; background: #bcbcbc; border-radius: 4px; }
.collapse { position: absolute; left: 295px; top: 55px; width: 23px; height: 50px; padding: 1px 0 0 5px; background: #fff; border-radius: 0 9px 9px 0; box-shadow: 1px 2px 2px rgba(0,0,0,.25); }

.content { width: 1625px; padding: 24px 27px 0 35px; }
h1 { font-size: 30px; line-height: 38px; color: #444; }
.filters { display: flex; align-items: center; height: 36px; margin: 14px 3px 15px 0; }
.filters .label { width: 110px; margin-top: -2px; }
.filters a { align-self: flex-start; height: 33px; line-height: 33px; padding: 0 9px 0 15px; border-right: 1px solid #ddd; }
.filters a.on { position: relative; color: #1a73e8; font-weight: 700; padding: 0 9px 0 14px; }
.filters a.on::after { content: ""; position: absolute; left: 41px; top: 41px; border: 9px solid transparent; border-top: 0; border-bottom: 12px solid #f5f5f5; }
.filters a:nth-of-type(5) { border: 0; }
.search { margin-left: auto; width: 240px; height: 36px; background: #fff; border: 1px solid #d5d5d5; border-radius: 5px; display: flex; align-items: center; justify-content: flex-end; padding-right: 6px; }

.table { margin-left: 4px; width: 1559px; border-radius: 8px; overflow: hidden; background: #ebebeb; color: #212529; border-top: 1px solid #ddd; border-bottom: 2px solid #d8d8dc; box-shadow: 0 0 4px rgba(0,0,0,.22); }
.row { height: 52px; display: grid; grid-template-columns: 91px 80px 162px 177px 180px 204px 273px 220px 172px; }
.row > div { position: relative; display: flex; align-items: center; justify-content: center; border-right: 1px solid #ddd; text-align: center; }
.row > div:last-child { border-right: 0; }
.head { height: 117px; font-weight: 700; font-size: 18px; line-height: 27px; background: #f5f5f5; border-bottom: 2px solid #ddd; }
.head > div:nth-child(3), .head > div:nth-child(4) { padding-right: 9px; }
.head > div:nth-child(6) { padding-right: 8px; }
.sort { position: absolute; right: 8px; bottom: 34px; width: 18px; height: 20px; }
.q { width: 15px; height: 15px; }
.with-help { gap: 8px; }
.with-help .q { margin-top: -3px; }
.check { gap: 7px; padding: 0 7px 2px 0; }
.head .check { padding: 0 0 1px 14px; }
.box { width: 13px; height: 13px; border: 1px solid #707070; border-radius: 2.5px; background: #fff; }
.row .domain { justify-content: flex-start; padding-left: 20px; color: #1f70e8; }
.row .status { color: #6cb91e; }
.detail { color: #000; text-decoration: underline; }
.switch { display: flex; align-items: center; gap: 9px; width: 64px; height: 27px; margin-top: -9px; padding-left: 6px; border-radius: 14px; background: #1a73e8; color: #fff; font-size: 13px; }
.switch.dns { margin-right: 2px; }
.switch i { width: 19px; height: 19px; border-radius: 50%; background: #fff; }

.below { display: flex; justify-content: space-between; padding: 22px 20px 0 0; }
.renew { padding-top: 6px; }
.renew button { width: 180px; height: 35px; margin-top: 12px; border-radius: 6px; background: #7fcb28; color: #fff; font-weight: 700; }
.paging { text-align: right; }
.pager { display: flex; align-items: center; height: 38px; }
.pager > span:first-child { margin: -3px 10px 0 0; }
.pager svg { width: 12px; height: 12px; fill: none; stroke: #888; stroke-width: 1.3; }
.pager .edge-first { margin-left: 14px; }
.pager .far { margin-left: 26px; }
.pager .near { margin-left: 18px; }
.pager .far:last-child { margin-right: 5px; }
.pager > b { width: 28px; height: 27px; margin-left: 18px; border-radius: 3px; background: #7fcb28; color: #fff; text-align: center; line-height: 27px; font-weight: 400; }
.select { width: 60px; height: 38px; display: flex; align-items: center; justify-content: space-between; padding: 0 10px; background: #fff; border: 1px solid #d5d5d5; border-radius: 4px; }
.paging p { margin-top: 13px; }

/* Overlays */
.toast { position: absolute; z-index: 3; left: 1595px; top: 128px; width: 300px; height: 89px; padding: 13px 13px; background: #f2dede; color: #a94442; border: 1px solid #ebc8cd; border-radius: 4px; box-shadow: 0 2px 6px rgba(0,0,0,.4); }
.toast-title { display: flex; gap: 6px; font-size: 24px; line-height: 28px; }
.toast-title svg { margin-top: 1px; }
.toast p { margin-top: 9px; white-space: nowrap; }
.close { position: absolute; right: 10px; top: 7px; width: 16px; height: 16px; }
.feedback { position: absolute; left: 1675px; top: 985px; width: 230px; height: 40px; padding: 0 0 0 22px; display: flex; align-items: center; gap: 16px; background: #2073e8; color: #fff; border-radius: 4px; box-shadow: 0 2px 4px rgba(0,0,0,.45); white-space: nowrap; }

/* Windows taskbar */
.taskbar { height: 40px; flex: none; z-index: 2; display: flex; justify-content: space-between; background: #1c1c1c; color: #fff; font: 12px/18px "Open Sans", "Noto Sans", sans-serif; letter-spacing: -.3px; }
.apps { display: grid; grid-template-columns: 48px 48px 51px repeat(9, 49px); }
.apps span { display: flex; align-items: center; justify-content: center; }
.apps span:nth-child(n+4) { margin-right: 1px; }
.apps .task-view { padding-right: 3px; }
.apps svg { width: 24px; height: 24px; }
.apps .running { box-shadow: inset 0 -2px #76b9ed; margin: 0 5px 0 4px; }
.apps .front { background: #4b4b4b; margin: 0 0 0 1px; }
.dw { font: 700 13px "Open Sans", sans-serif; letter-spacing: -1px; fill: #8fe60b; }
.tray { display: flex; align-items: center; border-right: 1px solid #666; margin-right: 4px; }
.tray svg { width: 16px; height: 16px; margin-right: 8px; }
.lang { width: 28px; margin-left: 2px; }
.clock { width: 46px; margin: 0 10px 0 8px; text-align: right; white-space: nowrap; }
.tray .notice { margin: 0 20px 0 10px; }
```
